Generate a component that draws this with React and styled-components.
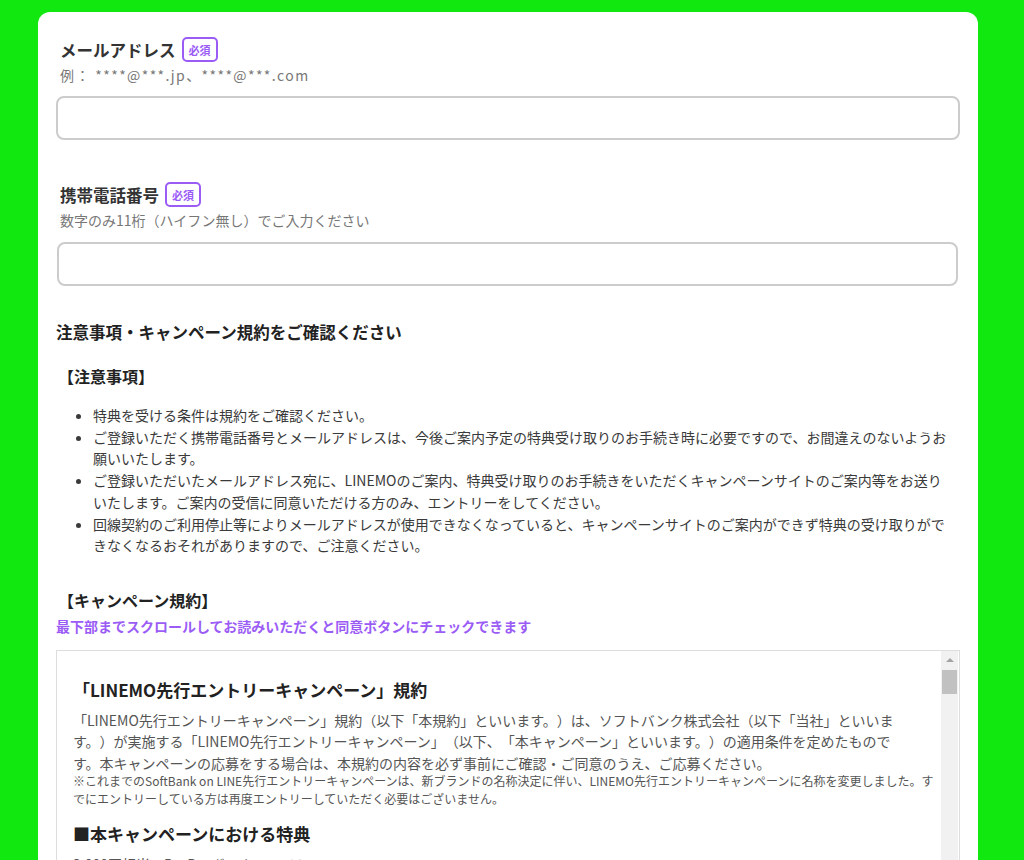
import styled, { createGlobalStyle } from "styled-components";

const GlobalStyle = createGlobalStyle`
  html, body {
    margin: 0;
    padding: 0;
    height: 860px;
    overflow: hidden;
    background: #10e810;
    font-family: "Noto Sans CJK JP", "Noto Sans", sans-serif;
    text-spacing-trim: space-all;
  }
`;

const Page = styled.div`
  padding: 12px 0 0 38px;
`;

const Card = styled.div`
  width: 904px;
  min-height: 900px;
  background: #fff;
  border-radius: 12px;
  padding: 25px 18px 0 18px;
`;

const Field = styled.div`
  margin-top: ${(p) => p.$top || 0}px;
`;

const LabelRow = styled.div`
  display: flex;
  align-items: center;
  height: 25px;
  padding-left: 4px;
`;

const Label = styled.span`
  font-size: 16.5px;
  font-weight: 700;
  color: #333;
`;

const Badge = styled.span`
  margin-left: 6px;
  height: 21px;
  padding: 0 5px;
  display: inline-flex;
  align-items: center;
  border: 2px solid #9b5cf6;
  border-radius: 5px;
  color: #9b5cf6;
  font-size: 11px;
  font-weight: 700;
`;

const Hint = styled.div`
  margin-top: 3px;
  padding-left: 4px;
  font-size: 14px;
  line-height: 20px;
  color: #777;
  letter-spacing: ${(p) => (p.$wide ? "1.4px" : "0")};
`;

const Input = styled.input`
  display: block;
  box-sizing: border-box;
  width: ${(p) => p.$width || 904}px;
  height: 44px;
  margin-top: ${(p) => p.$top || 11}px;
  margin-left: ${(p) => p.$left || 0}px;
  border: 2px solid #ccc;
  border-radius: 8px;
  background: #fff;
  outline: none;
`;

const SectionTitle = styled.h2`
  margin: 34px 0 0;
  font-size: 16.5px;
  line-height: 25px;
  font-weight: 700;
  color: #222;
`;

const SubTitle = styled.h3`
  margin: ${(p) => p.$top}px 0 0;
  padding-left: 2px;
  font-size: 16px;
  line-height: 24px;
  font-weight: 700;
  color: #222;
`;

const NoticeList = styled.ul`
  margin: 17px 0 0;
  padding: 0 6px 0 37px;
  font-size: 14px;
  line-height: 21.7px;
  color: #3a3a3a;
`;

const ScrollNote = styled.div`
  margin-top: 4px;
  font-size: 14px;
  line-height: 20px;
  font-weight: 700;
  color: #9b5cf6;
`;

const TermsBox = styled.div`
  margin-top: 14px;
  height: 260px;
  display: flex;
  border: 1px solid #ddd;
  border-bottom: none;
`;

const TermsContent = styled.div`
  flex: 1;
  overflow: hidden;
  padding: 26px 28px 0 16px;
  color: #555;
`;

const TermsTitle = styled.h4`
  margin: ${(p) => p.$top || 0}px 0 0;
  font-size: 17px;
  line-height: 25px;
  font-weight: 700;
  color: #222;
`;

const TermsText = styled.p`
  margin: 8px 0 0;
  font-size: 14px;
  line-height: 21.5px;
`;

const TermsNote = styled.p`
  margin: -2px -27px 0 0;
  font-size: 12px;
  line-height: 18px;
`;

const ScrollTrack = styled.div`
  width: 17px;
  background: #f1f1f1;
  display: flex;
  flex-direction: column;
  align-items: center;
  margin-right: 1px;
`;

const ScrollArrow = styled.div`
  margin-top: 7px;
  width: 0;
  height: 0;
  border-left: 4px solid transparent;
  border-right: 4px solid transparent;
  border-bottom: 4px solid #a3a3a3;
`;

const ScrollThumb = styled.div`
  margin-top: 8px;
  width: 15px;
  height: 24px;
  background: #c1c1c1;
`;

export default function App() {
  return (
    <Page>
      <GlobalStyle />
      <Card>
        <Field>
          <LabelRow>
            <Label>メールアドレス</Label>
            <Badge>必須</Badge>
          </LabelRow>
          <Hint $wide>例： ****@***.jp、****@***.com</Hint>
          <Input type="email" />
        </Field>

        <Field $top={42}>
          <LabelRow>
            <Label>携帯電話番号</Label>
            <Badge>必須</Badge>
          </LabelRow>
          <Hint>数字のみ11桁（ハイフン無し）でご入力ください</Hint>
          <Input type="tel" $top={12} $left={1} $width={901} />
        </Field>

        <SectionTitle>注意事項・キャンペーン規約をご確認ください</SectionTitle>
        <SubTitle $top={19}>【注意事項】</SubTitle>
        <NoticeList>
          <li>特典を受ける条件は規約をご確認ください。</li>
          <li>
            ご登録いただく携帯電話番号とメールアドレスは、今後ご案内予定の特典受け取りのお手続き時に必要ですので、お間違えのないようお願いいたします。
          </li>
          <li>
            ご登録いただいたメールアドレス宛に、LINEMOのご案内、特典受け取りのお手続きをいただくキャンペーンサイトのご案内等をお送りいたします。ご案内の受信に同意いただける方のみ、エントリーをしてください。
          </li>
          <li>
            回線契約のご利用停止等によりメールアドレスが使用できなくなっていると、キャンペーンサイトのご案内ができず特典の受け取りができなくなるおそれがありますので、ご注意ください。
          </li>
        </NoticeList>

        <SubTitle $top={31}>【キャンペーン規約】</SubTitle>
        <ScrollNote>最下部までスクロールしてお読みいただくと同意ボタンにチェックできます</ScrollNote>

        <TermsBox>
          <TermsContent>
            <TermsTitle>「LINEMO先行エントリーキャンペーン」規約</TermsTitle>
            <TermsText>
              「LINEMO先行エントリーキャンペーン」規約（以下「本規約」といいます。）は、ソフトバンク株式会社（以下「当社」といいます。）が実施する「LINEMO先行エントリーキャンペーン」（以下、「本キャンペーン」といいます。）の適用条件を定めたものです。本キャンペーンの応募をする場合は、本規約の内容を必ず事前にご確認・ご同意のうえ、ご応募ください。
            </TermsText>
            <TermsNote>
              ※これまでのSoftBank on LINE先行エントリーキャンペーンは、新ブランドの名称決定に伴い、LINEMO先行エントリーキャンペーンに名称を変更しました。すでにエントリーしている方は再度エントリーしていただく必要はございません。
            </TermsNote>
            <TermsTitle $top={13}>■本キャンペーンにおける特典</TermsTitle>
            <TermsText>3,000円相当のPayPayボーナスライト</TermsText>
          </TermsContent>
          <ScrollTrack>
            <ScrollArrow />
            <ScrollThumb />
          </ScrollTrack>
        </TermsBox>
      </Card>
    </Page>
  );
}
